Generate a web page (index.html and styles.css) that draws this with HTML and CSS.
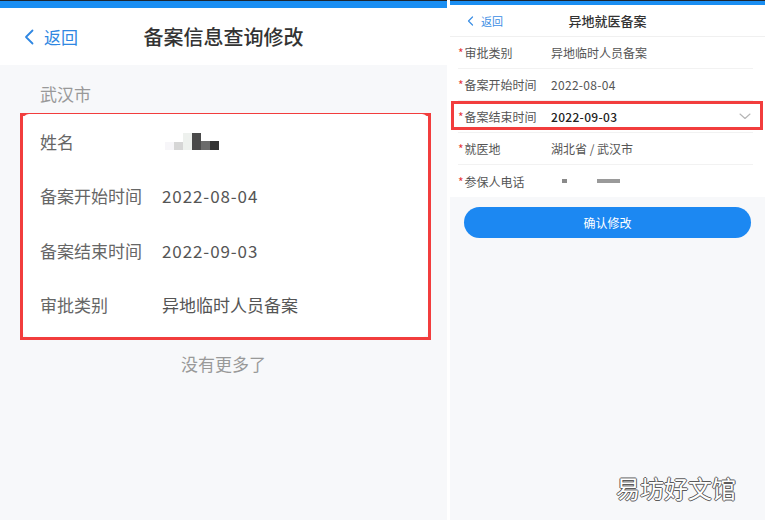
FILE: index.html
```html
<!DOCTYPE html>
<html>
<head>
<meta charset="utf-8">
<title>备案信息查询修改</title>
<link rel="stylesheet" href="styles.css">
</head>
<body>
<div class="shot">

    <!-- Left: query result -->
    <div class="pane pane-left">
        <div class="topbar"></div>
        <div class="nav">
            <a class="back">
                <svg width="10" height="16" viewBox="0 0 10 16"><polyline points="8.5,1.5 2,8 8.5,14.5" fill="none" stroke="#2f87e2" stroke-width="1.8" stroke-linecap="round" stroke-linejoin="round"/></svg>
                <span>返回</span>
            </a>
            <div class="nav-title">备案信息查询修改</div>
            <div></div>
        </div>

        <div class="section-label">武汉市</div>

        <div class="mark">
            <div class="card">
                <div class="row">
                    <span class="label">姓名</span>
                    <span class="value mosaic">
                        <i class="px px-a"></i><i class="px px-b"></i><i class="px px-c"></i><i class="px px-d"></i><i class="px px-e"></i><i class="px px-f"></i>
                    </span>
                </div>
                <div class="row">
                    <span class="label">备案开始时间</span>
                    <span class="value date">2022-08-04</span>
                </div>
                <div class="row">
                    <span class="label">备案结束时间</span>
                    <span class="value date">2022-09-03</span>
                </div>
                <div class="row">
                    <span class="label">审批类别</span>
                    <span class="value">异地临时人员备案</span>
                </div>
            </div>
        </div>

        <div class="no-more">没有更多了</div>
    </div>

    <div class="split"></div>

    <!-- Right: edit form -->
    <div class="pane pane-right">
        <div class="topbar topbar-thin"></div>
        <div class="nav nav-small">
            <a class="back">
                <svg width="7" height="10" viewBox="0 0 7 10"><polyline points="5.5,1 1.5,5 5.5,9" fill="none" stroke="#3b8ee4" stroke-width="1.2" stroke-linecap="round" stroke-linejoin="round"/></svg>
                <span>返回</span>
            </a>
            <div class="nav-title">异地就医备案</div>
            <div></div>
        </div>

        <div class="form">
            <div class="field">
                <span class="field-label"><b class="req">*</b>审批类别</span>
                <span class="field-value">异地临时人员备案</span>
            </div>
            <div class="field">
                <span class="field-label"><b class="req">*</b>备案开始时间</span>
                <span class="field-value date">2022-08-04</span>
            </div>
            <div class="field field-marked">
                <span class="field-label"><b class="req">*</b>备案结束时间</span>
                <span class="field-value date strong">2022-09-03</span>
                <svg class="arrow" width="12" height="7" viewBox="0 0 12 7"><polyline points="1,1 6,5.5 11,1" fill="none" stroke="#b5b5b5" stroke-width="1.1" stroke-linecap="round" stroke-linejoin="round"/></svg>
            </div>
            <div class="field">
                <span class="field-label"><b class="req">*</b>就医地</span>
                <span class="field-value">湖北省 / 武汉市</span>
            </div>
            <div class="field field-last">
                <span class="field-label"><b class="req">*</b>参保人电话</span>
                <span class="field-value phone"><i class="dash"></i><i class="blot"></i></span>
            </div>
        </div>

        <div class="actions">
            <a class="btn-primary">确认修改</a>
        </div>
    </div>

    <div class="watermark">易坊好文馆</div>
</div>
</body>
</html>
```

FILE: styles.css
```css
html, body {
    margin: 0px;
    padding: 0px;
}
body {
    font-family: "Noto Sans CJK SC", "Noto Sans", sans-serif;
    background: #ffffff;
    color: #333;
}
a {
    text-decoration: none;
}
.shot {
    position: relative;
    display: flex;
    width: 765px;
    height: 520px;
    overflow: hidden;
}
.pane {
    background: #f7f8fa;
    height: 520px;
}
.pane-left {
    width: 447px;
}
.pane-right {
    width: 315px;
}
.split {
    width: 3px;
    background: #ffffff;
}
.topbar {
    height: 7px;
    border-top: 1px solid #1c2733;
    background: #1a8ef2;
}
.topbar-thin {
    height: 4px;
}

/* nav bars */
.nav {
    display: grid;
    grid-template-columns: 1fr auto 1fr;
    align-items: center;
    height: 57px;
    background: #ffffff;
}
.back {
    display: flex;
    align-items: center;
    padding-left: 24px;
    color: #2f87e2;
    font-size: 17px;
}
.back svg {
    display: block;
    margin-right: 10px;
}
.nav-title {
    font-size: 20px;
    font-weight: 500;
    color: #333;
}
.nav-small {
    height: 31px;
    border-bottom: 1px solid #f0f0f0;
}
.nav-small .back {
    padding-left: 17px;
    font-size: 11px;
    color: #3b8ee4;
}
.nav-small .back svg {
    margin-right: 7px;
}
.nav-small .nav-title {
    font-size: 13px;
    font-weight: 500;
    color: #333;
}

/* left list */
.section-label {
    padding: 17px 0px 0px 40px;
    margin-bottom: 7px;
    line-height: 24px;
    font-size: 17px;
    color: #999;
}
.mark {
    margin-left: 20px;
    width: 405px;
    border: 3px solid #f23d3d;
}
.card {
    background: #ffffff;
    border-radius: 6px;
    padding-bottom: 5px;
}
.row {
    display: flex;
    align-items: center;
    height: 54.5px;
    padding-left: 17px;
    margin-top: -2px;
    font-size: 17px;
}
.row + .row {
    margin-top: 0px;
}
.label {
    width: 122px;
    color: #666;
}
.value {
    color: #555;
}
.row .date {
    letter-spacing: 0.9px;
}
.mosaic {
    display: flex;
    align-items: flex-end;
    height: 18px;
    margin-left: 3px;
}
.px {
    display: block;
    width: 9px;
}
.px-a { height: 8px; background: #f7f6f9; }
.px-b { height: 8px; background: #d6d6d6; }
.px-c { height: 17px; background: #eef1ee; }
.px-d { height: 17px; background: #4a4a4a; }
.px-e { height: 9px; background: #6b6b6b; }
.px-f { height: 9px; background: #333333; }
.no-more {
    margin-top: 12px;
    line-height: 24px;
    text-align: center;
    font-size: 17px;
    color: #999;
}

/* right form */
.form {
    background: #ffffff;
}
.field {
    position: relative;
    display: flex;
    align-items: center;
    height: 32px;
    margin: 0px 12px 0px 8px;
    border-bottom: 1px solid #f2f2f2;
    box-sizing: border-box;
    font-size: 12px;
}
.field-last {
    border-bottom: none;
}
.field-label {
    width: 93px;
    color: #555;
}
.req {
    color: #e63c3c;
    font-weight: normal;
    margin-right: 1px;
}
.field-value {
    color: #555;
}
.field .date {
    letter-spacing: 0.3px;
}
.strong {
    color: #222;
    font-weight: 500;
}
.arrow {
    margin-left: auto;
    margin-right: 2px;
}
.field-marked::after {
    content: "";
    position: absolute;
    left: -7px;
    right: -10px;
    top: 0px;
    height: 29px;
    border: 3px solid #f23d3d;
    box-sizing: border-box;
}
.phone {
    display: flex;
    align-items: center;
    height: 12px;
}
.dash {
    display: block;
    width: 5px;
    height: 4px;
    margin-left: 11px;
    background: #8a8a8a;
}
.blot {
    display: block;
    width: 23px;
    height: 4px;
    margin-left: 30px;
    background: #9a9a9a;
}
.actions {
    padding: 10px 14px 0px;
}
.btn-primary {
    display: block;
    height: 31px;
    line-height: 31px;
    border-radius: 16px;
    background: #1c88f2;
    color: #ffffff;
    text-align: center;
    font-size: 12px;
}

/* overlay watermark */
.watermark {
    position: absolute;
    left: 616px;
    top: 473px;
    font-size: 24px;
    line-height: 30px;
    color: #ffffff;
    text-shadow: 1px 0px 0px #5a5a5a, -1px 0px 0px #5a5a5a, 0px 1px 0px #5a5a5a, 0px -1px 0px #5a5a5a;
}
```
